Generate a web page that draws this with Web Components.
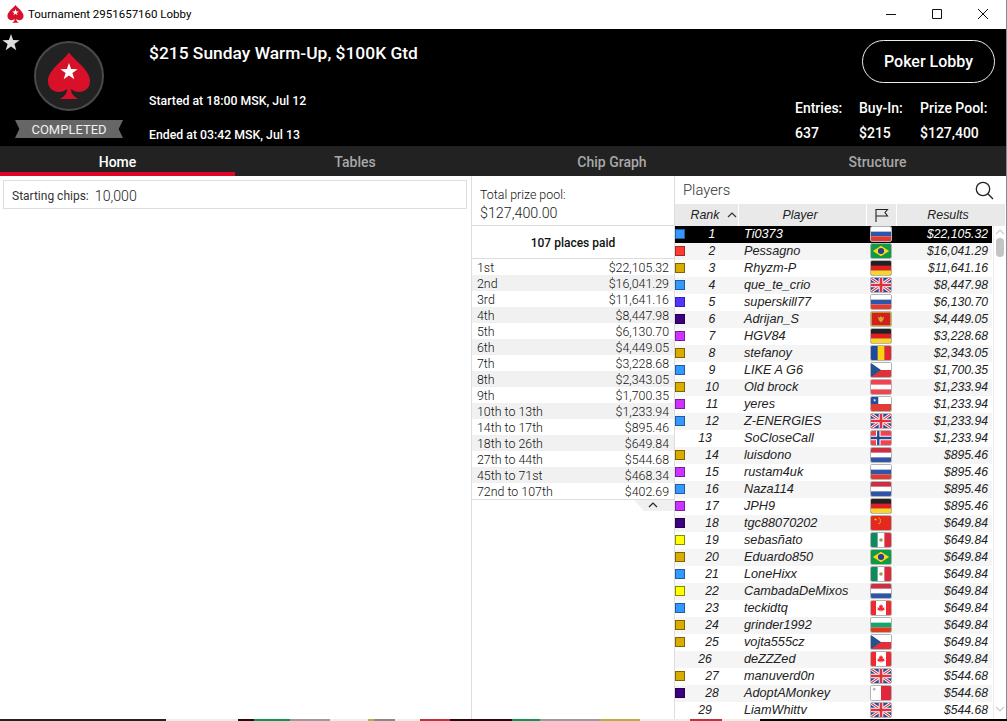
<!DOCTYPE html>
<html>
<head>
<meta charset="utf-8">
<title>Tournament Lobby</title>
<style>
  html, body { margin: 0; height: 100%; overflow: hidden; background: #fff; }
  body { font-family: Roboto, "Liberation Sans", sans-serif; }
</style>
</head>
<body>
<lobby-window>
  <title-bar>Tournament 2951657160 Lobby</title-bar>
  <lobby-header></lobby-header>
  <lobby-tabs>
    <lobby-tab active>Home</lobby-tab>
    <lobby-tab>Tables</lobby-tab>
    <lobby-tab>Chip Graph</lobby-tab>
    <lobby-tab>Structure</lobby-tab>
  </lobby-tabs>
  <lobby-body>
    <home-panel></home-panel>
    <prize-panel>
      <prize-row place="1st">$22,105.32</prize-row>
      <prize-row place="2nd">$16,041.29</prize-row>
      <prize-row place="3rd">$11,641.16</prize-row>
      <prize-row place="4th">$8,447.98</prize-row>
      <prize-row place="5th">$6,130.70</prize-row>
      <prize-row place="6th">$4,449.05</prize-row>
      <prize-row place="7th">$3,228.68</prize-row>
      <prize-row place="8th">$2,343.05</prize-row>
      <prize-row place="9th">$1,700.35</prize-row>
      <prize-row place="10th to 13th">$1,233.94</prize-row>
      <prize-row place="14th to 17th">$895.46</prize-row>
      <prize-row place="18th to 26th">$649.84</prize-row>
      <prize-row place="27th to 44th">$544.68</prize-row>
      <prize-row place="45th to 71st">$468.34</prize-row>
      <prize-row place="72nd to 107th">$402.69</prize-row>
    </prize-panel>
    <players-panel></players-panel>
  </lobby-body>
</lobby-window>

<script>
const SPADE = "M35 11.5C29 20 14 29 14 40C14 47 19 51 25 51C28 51 31 50 33 48C33 52 31 55 26 58L44 58C39 55 37 52 37 48C39 50 42 51 45 51C51 51 56 47 56 40C56 29 41 20 35 11.5Z";
const STAR = "35,22 37.1,28.1 43.6,28.2 38.4,32.1 40.3,38.3 35,34.6 29.7,38.3 31.6,32.1 26.4,28.2 32.9,28.1";

class LobbyWindow extends HTMLElement {
  constructor() {
    super();
    this.attachShadow({ mode: 'open' }).innerHTML = `
    <style>
      :host { display: flex; width: 1007px; height: 721px; overflow: hidden; }
      #main { width: 1006px; height: 719px; display: flex; flex-direction: column; overflow: hidden; }
      #edge { width: 1px; background: #8a8a8a; }
      #strip {
        height: 2px; width: 1007px;
        background: linear-gradient(90deg, #222 0 166px, #eeeee4 166px 238px, #2a0a08 238px 254px,
          #12934f 254px 290px, #9a9aa0 290px 330px, #eeeee4 330px 368px, #b8b040 368px 374px, #888 374px 395px,
          #eeeee4 395px 420px, #c5303a 420px 450px, #2a0a08 450px 512px, #12934f 512px 540px,
          #9a9aa0 540px 600px, #b8b040 600px 640px, #eeeee4 640px 690px, #c5303a 690px 722px, #eeeee4 722px 760px, #000 760px);
      }
      #outer { display: flex; flex-direction: column; }
    </style>
    <div id="outer">
      <div style="display:flex">
        <div id="main"><slot></slot></div>
        <div id="edge"></div>
      </div>
      <div id="strip"></div>
    </div>`;
  }
}

class TitleBar extends HTMLElement {
  constructor() {
    super();
    this.attachShadow({ mode: 'open' }).innerHTML = `
    <style>
      :host {
        display: flex; align-items: center; flex: none; height: 29px; background: #fff; color: #000;
        font: 11.5px Roboto, "Open Sans", sans-serif; padding: 0 0 2px 7px; box-sizing: border-box;
      }
      #logo { width: 17px; height: 20px; margin-right: 4px; }
      #text { flex: 1; white-space: nowrap; }
      svg.btn { display: block; width: 12px; height: 12px; fill: none; stroke: #111; stroke-width: 1; }
      #controls { display: flex; gap: 34px; margin-right: 17px; }
    </style>
    <svg id="logo" viewBox="13 9 44 52">
      <path d="${SPADE}" fill="#d8102a"/>
      <polygon points="${STAR}" fill="#fff"/>
    </svg>
    <div id="text"><slot></slot></div>
    <div id="controls">
      <svg class="btn" viewBox="0 0 12 12"><path d="M1 6.5H11"/></svg>
      <svg class="btn" viewBox="0 0 12 12"><path d="M1.5 1.5H10.5V10.5H1.5Z"/></svg>
      <svg class="btn" viewBox="0 0 12 12"><path d="M1 1L11 11M11 1L1 11"/></svg>
    </div>`;
  }
}

class LobbyHeader extends HTMLElement {
  constructor() {
    super();
    this.attachShadow({ mode: 'open' }).innerHTML = `
    <style>
      :host {
        display: flex; position: relative; flex: none; height: 117px; background: #000; color: #fff;
        font-family: Roboto, sans-serif; font-weight: 500;
      }
      #star { position: absolute; left: 2px; top: 4px; width: 18px; height: 18px; fill: #dcdcdc; }
      #badge { width: 149px; flex: none; display: flex; flex-direction: column; align-items: center; padding: 12px 11px 0 0; box-sizing: border-box; }
      #disc { width: 70px; height: 70px; display: block; }
      #ribbon {
        margin-top: 9px; width: 108px; height: 18px; background: #666; color: #f0f0f0;
        font-size: 13px; font-weight: 400; line-height: 20px; text-align: center;
        clip-path: polygon(0 0, 100% 0, 96% 50%, 100% 100%, 0 100%, 4% 50%);
      }
      #info { flex: 1; display: flex; flex-direction: column; }
      h1 { margin: 14px 0 0; font-size: 17.4px; line-height: 20px; font-weight: 500; }
      .when { font-size: 12.3px; line-height: 14px; white-space: nowrap; }
      #started { margin-top: 31px; }
      #ended { margin-top: 20px; }
      #side { width: 212px; flex: none; display: flex; flex-direction: column; align-items: flex-end; }
      #poker {
        margin: 11px 11px 0 0; width: 133px; height: 43px; box-sizing: border-box; border: 1px solid #eee; border-radius: 22px;
        font-size: 16px; line-height: 41px; text-align: center;
      }
      #stats { display: flex; margin: 17px 0 0 0; width: 212px; box-sizing: border-box; padding-left: 1px; font-size: 14px; }
      .stat { display: flex; flex-direction: column; gap: 8px; line-height: 17px; white-space: nowrap; }
      .stat:nth-child(1) { width: 64px; }
      .stat:nth-child(2) { width: 61px; }
    </style>
    <svg id="star" viewBox="26 21 18 18"><polygon points="${STAR}"/></svg>
    <div id="badge">
      <svg id="disc" viewBox="0 0 70 70">
        <circle cx="35" cy="35" r="34" fill="#222" stroke="#4a4a4a" stroke-width="2"/>
        <path d="${SPADE}" fill="#d8102a"/>
        <polygon points="${STAR}" fill="#fff"/>
      </svg>
      <div id="ribbon">COMPLETED</div>
    </div>
    <div id="info">
      <h1>$215 Sunday Warm-Up, $100K Gtd</h1>
      <div class="when" id="started">Started at 18:00 MSK, Jul 12</div>
      <div class="when" id="ended">Ended at 03:42 MSK, Jul 13</div>
    </div>
    <div id="side">
      <div id="poker">Poker Lobby</div>
      <div id="stats">
        <div class="stat"><span>Entries:</span><span>637</span></div>
        <div class="stat"><span>Buy-In:</span><span>$215</span></div>
        <div class="stat"><span>Prize Pool:</span><span>$127,400</span></div>
      </div>
    </div>`;
  }
}

class LobbyTabs extends HTMLElement {
  constructor() {
    super();
    this.attachShadow({ mode: 'open' }).innerHTML = `
    <style>
      :host {
        display: grid; flex: none; height: 30px; background: #222;
        grid-template-columns: 235px 240px 274px 257px;
      }
    </style>
    <slot></slot>`;
  }
}

class LobbyTab extends HTMLElement {
  constructor() {
    super();
    this.attachShadow({ mode: 'open' }).innerHTML = `
    <style>
      :host {
        display: block; box-sizing: border-box; height: 30px; text-align: center;
        font: 500 14px/32px Roboto, sans-serif; color: #a8a8a8;
      }
      :host([active]) { color: #fff; border-bottom: 4px solid #e0062a; line-height: 32px; }
    </style>
    <slot></slot>`;
  }
}

class LobbyBody extends HTMLElement {
  constructor() {
    super();
    this.attachShadow({ mode: 'open' }).innerHTML = `
    <style>
      :host { display: flex; flex: 1; min-height: 0; background: #fff; }
    </style>
    <slot></slot>`;
  }
}

class HomePanel extends HTMLElement {
  constructor() {
    super();
    this.attachShadow({ mode: 'open' }).innerHTML = `
    <style>
      :host { display: block; width: 471px; flex: none; padding: 4px 4px 0 3px; box-sizing: border-box; }
      #box {
        height: 29px; box-sizing: border-box; border: 1px solid #ddd; padding: 2px 0 0 8px;
        display: flex; align-items: center; gap: 6px; font: 12px Roboto, sans-serif; color: #333;
      }
      b { font-weight: 300; font-size: 14.2px; color: #222; }
    </style>
    <div id="box"><span>Starting chips:</span><b>10,000</b></div>`;
  }
}

class PrizePanel extends HTMLElement {
  constructor() {
    super();
    this.attachShadow({ mode: 'open' }).innerHTML = `
    <style>
      :host {
        display: block; width: 204px; flex: none; box-sizing: border-box;
        border-left: 1px solid #ddd; border-right: 1px solid #ddd;
        font: 300 12.4px Roboto, sans-serif; color: #111;
      }
      #total { height: 50px; box-sizing: border-box; padding: 12px 0 0 8px; border-bottom: 1px solid #ddd; line-height: 14px; }
      #total div { font-size: 14.3px; line-height: 18px; margin-top: 2px; font-weight: 300; color: #222; }
      #paid { height: 33px; box-sizing: border-box; border-bottom: 1px solid #ddd; text-align: center; font-size: 12px; font-weight: 500; line-height: 34px; color: #111; }
      #rows { border-bottom: 1px solid #ddd; }
      #fold { display: block; width: 40px; height: 12px; margin-left: auto; }
      ::slotted(prize-row:nth-child(even)) { background: #f1f1f1; }
    </style>
    <div id="total">Total prize pool:<div>$127,400.00</div></div>
    <div id="paid">107 places paid</div>
    <div id="rows"><slot></slot></div>
    <svg id="fold" viewBox="0 0 40 12">
      <polygon points="0,0 40,0 40,11 10,11" fill="#f0f0f0"/>
      <path d="M15 7L19 3L23 7" fill="none" stroke="#222" stroke-width="1.2"/>
    </svg>`;
  }
}

class PrizeRow extends HTMLElement {
  constructor() {
    super();
    this.attachShadow({ mode: 'open' }).innerHTML = `
    <style>
      :host { display: flex; justify-content: space-between; height: 16px; line-height: 18px; padding: 0 5px 0 5px; overflow: hidden; }
    </style>
    <span id="place"></span><span><slot></slot></span>`;
  }
  connectedCallback() {
    this.shadowRoot.querySelector("#place").textContent = this.getAttribute("place");
  }
}

// flags are all drawn on a 22x16 box
const FLAGS = {
  ru: `<rect width="22" height="16" fill="#fff"/><rect y="5.3" width="22" height="5.4" fill="#2d55a8"/><rect y="10.7" width="22" height="5.3" fill="#e23c32"/>`,
  br: `<rect width="22" height="16" fill="#0e9a47"/><path d="M11 2L20 8L11 14L2 8Z" fill="#fad61c"/><circle cx="11" cy="8" r="3.4" fill="#24408e"/>`,
  de: `<rect width="22" height="16" fill="#222"/><rect y="5.3" width="22" height="5.4" fill="#e01e26"/><rect y="10.7" width="22" height="5.3" fill="#fdd22a"/>`,
  gb: `<rect width="22" height="16" fill="#2b4a9b"/><path d="M0 0L22 16M22 0L0 16" stroke="#fff" stroke-width="3.4"/><path d="M0 0L22 16M22 0L0 16" stroke="#e0323c" stroke-width="1.2"/><path d="M11 0V16M0 8H22" stroke="#fff" stroke-width="5"/><path d="M11 0V16M0 8H22" stroke="#e0323c" stroke-width="3"/>`,
  me: `<rect width="22" height="16" fill="#c9a227"/><rect x="1" y="1" width="20" height="14" fill="#d2201f"/><path d="M7.5 5L9.5 6.5L11 4.5L12.5 6.5L14.5 5L13.5 9L11 12L8.5 9Z" fill="#d8a62a"/>`,
  ro: `<rect width="22" height="16" fill="#fbd116"/><rect width="7.3" height="16" fill="#1d4a9c"/><rect x="14.7" width="7.3" height="16" fill="#dc2a35"/>`,
  cz: `<rect width="22" height="16" fill="#fff"/><rect y="8" width="22" height="8" fill="#e0303a"/><path d="M0 0L11 8L0 16Z" fill="#24528f"/>`,
  at: `<rect width="22" height="16" fill="#ee4350"/><rect y="5.3" width="22" height="5.4" fill="#fff"/>`,
  cl: `<rect width="22" height="16" fill="#fff"/><rect y="8" width="22" height="8" fill="#e23c32"/><rect width="8" height="8" fill="#1f4ea1"/><path d="M4 1.8L4.9 5L2 3.2H6L3.1 5Z" fill="#fff"/>`,
  no: `<rect width="22" height="16" fill="#ef4350"/><path d="M8 0V16M0 8H22" stroke="#fff" stroke-width="5"/><path d="M8 0V16M0 8H22" stroke="#24478f" stroke-width="2.6"/>`,
  nl: `<rect width="22" height="16" fill="#fff"/><rect width="22" height="5.3" fill="#c93040"/><rect y="10.7" width="22" height="5.3" fill="#2f56a5"/>`,
  cn: `<rect width="22" height="16" fill="#e4291e"/><path d="M5 2L6 5.2L3 3.4H7L4 5.2Z" fill="#fcd116"/><circle cx="9" cy="2.5" r=".7" fill="#fcd116"/><circle cx="10.3" cy="4.5" r=".7" fill="#fcd116"/><circle cx="10.3" cy="6.8" r=".7" fill="#fcd116"/><circle cx="9" cy="8.5" r=".7" fill="#fcd116"/>`,
  mx: `<rect width="22" height="16" fill="#fff"/><rect width="7.3" height="16" fill="#0f8a5e"/><rect x="14.7" width="7.3" height="16" fill="#dc2a3c"/><circle cx="11" cy="8" r="2" fill="#a89560"/>`,
  ca: `<rect width="22" height="16" fill="#fff"/><rect width="5.5" height="16" fill="#ee2a30"/><rect x="16.5" width="5.5" height="16" fill="#ee2a30"/><path d="M11 3.5L12 5.5L13.2 5L12.8 8L14.8 7.2L14.4 9L15.5 9.5L12.8 11L11.3 10.6V12.5H10.7V10.6L9.2 11L6.5 9.5L7.6 9L7.2 7.2L9.2 8L8.8 5L10 5.5Z" fill="#ee2a30"/>`,
  bg: `<rect width="22" height="16" fill="#fff"/><rect y="5.3" width="22" height="5.4" fill="#12a66f"/><rect y="10.7" width="22" height="5.3" fill="#df3a1e"/>`,
  mt: `<rect width="22" height="16" fill="#fff"/><rect x="11" width="11" height="16" fill="#e0283c"/><path d="M2 3.5H5M3.5 2V5" stroke="#aaa" stroke-width="1.4"/>`
};

class CountryFlag extends HTMLElement {
  constructor() {
    super();
    this.attachShadow({ mode: 'open' });
  }
  connectedCallback() {
    this.shadowRoot.innerHTML = `
    <style>
      :host { display: block; width: 22px; height: 16px; box-sizing: border-box; border: 1px solid #b4b4b4; border-radius: 2px; overflow: hidden; }
      svg { display: block; width: 100%; height: 100%; }
    </style>
    <svg viewBox="0 0 22 16" preserveAspectRatio="none">${FLAGS[this.getAttribute("code")]}</svg>`;
  }
}

const SWATCH = {
  b: ["#3399ff", "#1c5f9c"], r: ["#ff3b30", "#a32a20"], g: ["#d9ad00", "#7d6400"], v: ["#5533ff", "#3322aa"],
  p: ["#3d0080", "#26004f"], m: ["#cc33ff", "#7d1f9d"], y: ["#ffff00", "#8a8a00"]
};

class PlayerRow extends HTMLElement {
  constructor() {
    super();
    this.attachShadow({ mode: 'open' });
  }
  connectedCallback() {
    const tier = this.getAttribute("tier");
    const sw = SWATCH[tier];
    this.shadowRoot.innerHTML = `
    <style>
      :host {
        display: flex; height: 17px; color: #222; white-space: nowrap;
        font: italic 12.2px/17px "Liberation Sans", Arial, sans-serif;
      }
      :host([selected]) { background: #000; color: #fff; }
      #rank { width: 64px; flex: none; display: flex; align-items: flex-start; }
      #rank i { display: block; box-sizing: border-box; width: 10px; height: 10px; margin-top: 3px; border: 1px solid; flex: none; }
      #rank span { flex: 1; text-align: center; }
      :host([bare]) #rank { width: 60px; margin-right: 4px; }
      #name { width: 127px; flex: none; padding-left: 5px; box-sizing: border-box; font-size: 12.7px; }
      #flag { width: 29px; flex: none; padding: 0 3px 0 4px; box-sizing: border-box; }
      #amount { flex: 1; text-align: right; padding-right: 4px; }
    </style>
    <div id="rank">${sw ? `<i style="background:${sw[0]};border-color:${sw[1]}"></i>` : ""}<span>${this.getAttribute("rank")}</span></div>
    <div id="name"><slot></slot></div>
    <div id="flag"><country-flag code="${this.getAttribute("flag")}"></country-flag></div>
    <div id="amount">${this.getAttribute("amount")}</div>`;
  }
}

const PLAYERS = [
  ["b","Ti0373","ru","$22,105.32"],["r","Pessagno","br","$16,041.29"],["g","Rhyzm-P","de","$11,641.16"],
  ["b","que_te_crio","gb","$8,447.98"],["v","superskill77","ru","$6,130.70"],["p","Adrijan_S","me","$4,449.05"],
  ["m","HGV84","de","$3,228.68"],["g","stefanoy","ro","$2,343.05"],["b","LIKE A G6","cz","$1,700.35"],
  ["g","Old brock","at","$1,233.94"],["m","yeres","cl","$1,233.94"],["b","Z-ENERGIES","gb","$1,233.94"],
  ["","SoCloseCall","no","$1,233.94"],["g","luisdono","nl","$895.46"],["m","rustam4uk","ru","$895.46"],
  ["b","Naza114","nl","$895.46"],["m","JPH9","de","$895.46"],["p","tgc88070202","cn","$649.84"],
  ["y","sebasñato","mx","$649.84"],["g","Eduardo850","br","$649.84"],["b","LoneHixx","mx","$649.84"],
  ["y","CambadaDeMixos","nl","$649.84"],["b","teckidtq","ca","$649.84"],["g","grinder1992","bg","$649.84"],
  ["g","vojta555cz","cz","$649.84"],["","deZZZed","ca","$649.84"],["g","manuverd0n","gb","$544.68"],
  ["p","AdoptAMonkey","mt","$544.68"],["","LiamWhittv","gb","$544.68"]
];

class PlayersPanel extends HTMLElement {
  constructor() {
    super();
    this.attachShadow({ mode: 'open' }).innerHTML = `
    <style>
      :host { display: flex; flex-direction: column; flex: 1; min-width: 0; overflow: hidden; }
      #top { height: 28px; flex: none; display: flex; align-items: center; justify-content: space-between; padding: 0 12px 0 8px; font: 300 14.8px Roboto, sans-serif; color: #333; }
      #top svg { width: 19px; height: 19px; fill: none; stroke: #222; stroke-width: 1.3; }
      #head {
        height: 22px; flex: none; display: flex; background: #e9e9e9; gap: 1px; color: #222; margin-right: 1px;
        font: italic 12.4px/22px "Liberation Sans", Arial, sans-serif; text-align: center;
      }
      #head div { position: relative; display: flex; justify-content: center; align-items: center; box-sizing: border-box; }
      #head div + div { box-shadow: -1px 0 0 #fff; }
      #h1 { width: 63px; gap: 8px; padding-left: 15px; }
      #h2 { width: 127px; padding-right: 5px; }
      #h3 { width: 29px; }
      #h4 { flex: 1; padding-right: 6px; }
      #h1 svg { width: 10px; height: 6px; fill: none; stroke: #333; stroke-width: 1.2; }
      #h3 svg { width: 15px; height: 14px; fill: none; stroke: #222; stroke-width: 1.1; }
      #list { flex: 1; min-height: 0; display: flex; }
      #rows { width: 317px; flex: none; overflow: hidden; }
      ::slotted(player-row:nth-child(even)) { background: #f5f5f5; }
      #bar { flex: 1; display: flex; flex-direction: column; align-items: center; border-left: 1px solid #ececec; margin-left: 1px; }
      #bar svg { width: 10px; height: 7px; fill: none; stroke: #ccc; stroke-width: 1.2; flex: none; }
      #thumb { width: 8px; height: 19px; background: #c4c4c4; border-radius: 4px; margin-top: 3px; }
      #gap { flex: 1; }
    </style>
    <div id="top">
      <span>Players</span>
      <svg viewBox="0 0 19 19"><circle cx="8" cy="8" r="6.7"/><path d="M12.8 12.8L18 18"/></svg>
    </div>
    <div id="head">
      <div id="h1">Rank<svg viewBox="0 0 10 6"><path d="M1 5L5 1L9 5"/></svg></div>
      <div id="h2">Player</div>
      <div id="h3"><svg viewBox="0 0 15 14"><path d="M2 14V1.5H13.5L11 4.5L13.5 8H2"/></svg></div>
      <div id="h4">Results</div>
    </div>
    <div id="list">
      <div id="rows"><slot></slot></div>
      <div id="bar">
        <svg viewBox="0 0 10 7" style="margin-top:2px"><path d="M1 6L5 2L9 6"/></svg>
        <div id="thumb"></div>
        <div id="gap"></div>
        <svg viewBox="0 0 10 7" style="margin-bottom:6px"><path d="M1 1L5 5L9 1"/></svg>
      </div>
    </div>`;
  }
  connectedCallback() {
    if (this.children.length) return;
    PLAYERS.forEach((p, i) => {
      const row = document.createElement("player-row");
      row.setAttribute("rank", i + 1);
      row.setAttribute("tier", p[0]);
      row.setAttribute("flag", p[2]);
      row.setAttribute("amount", p[3]);
      if (!p[0]) row.setAttribute("bare", "");
      if (i == 0) row.setAttribute("selected", "");
      row.textContent = p[1];
      this.appendChild(row);
    });
  }
}

customElements.define("lobby-window", LobbyWindow);
customElements.define("title-bar", TitleBar);
customElements.define("lobby-header", LobbyHeader);
customElements.define("lobby-tabs", LobbyTabs);
customElements.define("lobby-tab", LobbyTab);
customElements.define("lobby-body", LobbyBody);
customElements.define("home-panel", HomePanel);
customElements.define("prize-panel", PrizePanel);
customElements.define("prize-row", PrizeRow);
customElements.define("country-flag", CountryFlag);
customElements.define("player-row", PlayerRow);
customElements.define("players-panel", PlayersPanel);
</script>
</body>
</html>
